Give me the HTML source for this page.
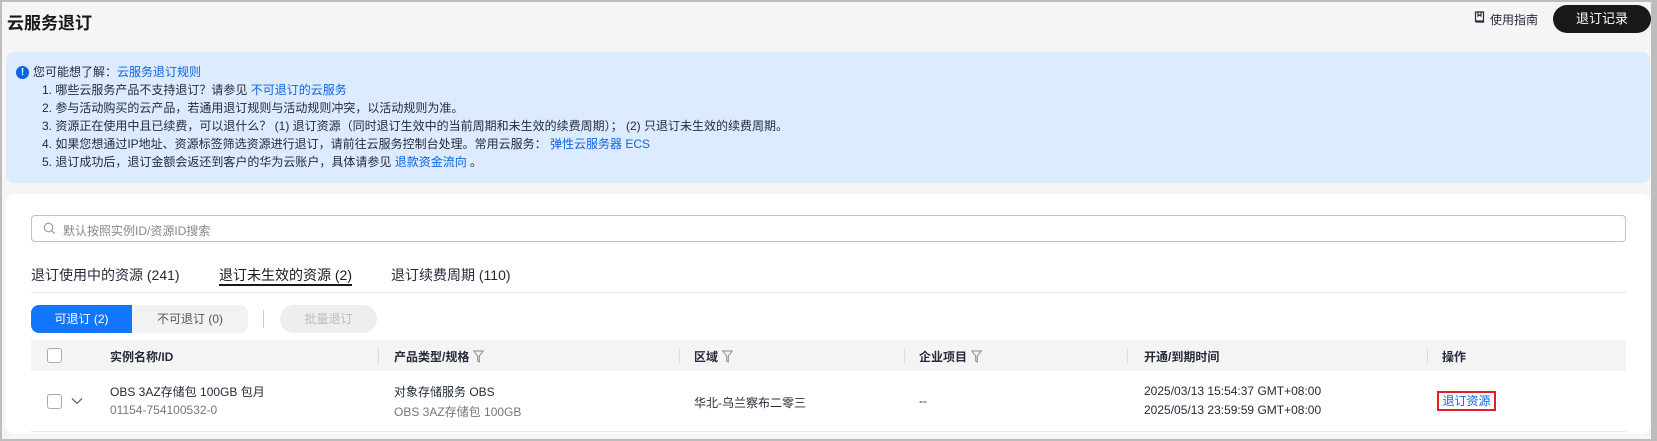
<!DOCTYPE html>
<html><head><meta charset="utf-8"><style>
*{box-sizing:border-box;margin:0;padding:0}
body{width:1657px;height:441px;overflow:hidden;background:#f5f5f5;font-family:"Liberation Sans","Noto Sans CJK SC",sans-serif;font-size:12px;color:#252b3a;position:relative}
.frame{position:absolute;left:0;top:0;width:1657px;height:441px;border:2px solid #bdbdbd;border-right-width:6px;pointer-events:none}
.a{position:absolute;white-space:nowrap}
.blue{color:#0d64e6}
.info{position:absolute;left:6px;top:52px;width:1644px;height:131px;background:#dcebff;border-radius:8px}
.card{position:absolute;left:6px;top:194px;width:1644px;height:240px;background:#fff;border-radius:8px}
.th{position:absolute;top:340px;left:31px;width:1595px;height:31px;background:#f4f4f4}
.sep{position:absolute;top:8px;width:1px;height:16px;background:#ddd}
.hd{position:absolute;top:8px;font-size:12px;color:#252b3a;font-weight:bold}
.cb{position:absolute;width:15px;height:15px;border:1px solid #aaa;border-radius:3px;background:#fff}
.fl{display:inline-block;vertical-align:-2px;margin-left:4px}
</style></head><body>
<div class="a" style="left:7px;top:9px;font-size:17px;font-weight:bold;color:#191919">云服务退订</div>
<svg class="a" style="left:1474px;top:11px" width="11" height="13" viewBox="0 0 11 13"><path d="M1.5 1h8v10h-7a1 1 0 0 1-1-1z M1.5 10h8 M4 1v4l1.5-1 1.5 1V1" fill="none" stroke="#252b3a" stroke-width="1.2"/></svg>
<div class="a" style="left:1490px;top:11px;font-size:12px">使用指南</div>
<div class="a" style="left:1553px;top:5px;width:98px;height:28px;border-radius:14px;background:#191919;color:#fff;font-size:13px;text-align:center;line-height:28px">退订记录</div>

<div class="info"></div>
<div class="a" style="left:16px;top:66px;width:13px;height:13px;border-radius:50%;background:#0d64e6;color:#fff;font-size:10px;font-weight:bold;text-align:center;line-height:13px">!</div>
<div class="a" style="left:33px;top:63px;line-height:18px;font-size:12px;color:#252b3a">您可能想了解：<span class="blue">云服务退订规则</span></div>
<div class="a" style="left:42px;top:81px;line-height:18px;font-size:12px">
1. 哪些云服务产品不支持退订？请参见 <span class="blue">不可退订的云服务</span><br>
2. 参与活动购买的云产品，若通用退订规则与活动规则冲突，以活动规则为准。<br>
3. 资源正在使用中且已续费，可以退什么？ (1) 退订资源（同时退订生效中的当前周期和未生效的续费周期）； (2) 只退订未生效的续费周期。<br>
4. 如果您想通过IP地址、资源标签筛选资源进行退订，请前往云服务控制台处理。常用云服务： <span class="blue">弹性云服务器 ECS</span><br>
5. 退订成功后，退订金额会返还到客户的华为云账户，具体请参见 <span class="blue">退款资金流向</span> 。</div>

<div class="card"></div>
<div class="a" style="left:31px;top:215px;width:1595px;height:27px;border:1px solid #c2c2c2;border-radius:4px"></div>
<svg class="a" style="left:43px;top:222px" width="13" height="13" viewBox="0 0 13 13"><circle cx="5.5" cy="5.5" r="4.3" fill="none" stroke="#999" stroke-width="1.1"/><path d="M8.7 8.7l3 3" stroke="#999" stroke-width="1.1"/></svg>
<div class="a" style="left:63px;top:222px;font-size:12px;color:#888">默认按照实例ID/资源ID搜索</div>

<div class="a" style="left:31px;top:265px;font-size:14px">退订使用中的资源 (241)</div>
<div class="a" style="left:219px;top:265px;font-size:14px;color:#191919">退订未生效的资源 (2)</div>
<div class="a" style="left:219px;top:284px;width:133px;height:2px;background:#191919"></div>
<div class="a" style="left:391px;top:265px;font-size:14px">退订续费周期 (110)</div>
<div class="a" style="left:31px;top:292px;width:1595px;height:1px;background:#e8e8e8"></div>

<div class="a" style="left:31px;top:305px;width:101px;height:28px;background:#1476ff;border-radius:8px 0 0 8px;color:#fff;text-align:center;line-height:28px">可退订 (2)</div>
<div class="a" style="left:132px;top:305px;width:116px;height:28px;background:#f2f2f2;border-radius:0 8px 8px 0;color:#555;text-align:center;line-height:28px">不可退订 (0)</div>
<div class="a" style="left:263px;top:310px;width:1px;height:18px;background:#ccc"></div>
<div class="a" style="left:280px;top:305px;width:97px;height:28px;background:#eee;border-radius:14px;color:#bbb;text-align:center;line-height:28px">批量退订</div>

<div class="th">
<div class="cb" style="left:16px;top:8px"></div>
<div class="hd" style="left:79px">实例名称/ID</div>
<div class="sep" style="left:347px"></div><div class="hd" style="left:363px">产品类型/规格<svg class="fl" width="11" height="13" viewBox="0 0 11 13"><path d="M0.8 1h9.4L6.3 6v6L4.7 11V6z" fill="none" stroke="#888" stroke-width="1"/></svg></div>
<div class="sep" style="left:648px"></div><div class="hd" style="left:663px">区域<svg class="fl" width="11" height="13" viewBox="0 0 11 13"><path d="M0.8 1h9.4L6.3 6v6L4.7 11V6z" fill="none" stroke="#888" stroke-width="1"/></svg></div>
<div class="sep" style="left:873px"></div><div class="hd" style="left:888px">企业项目<svg class="fl" width="11" height="13" viewBox="0 0 11 13"><path d="M0.8 1h9.4L6.3 6v6L4.7 11V6z" fill="none" stroke="#888" stroke-width="1"/></svg></div>
<div class="sep" style="left:1096px"></div><div class="hd" style="left:1113px">开通/到期时间</div>
<div class="sep" style="left:1396px"></div><div class="hd" style="left:1411px">操作</div>
</div>
<div class="cb" style="left:47px;top:394px"></div>
<svg class="a" style="left:71px;top:397px" width="12" height="8" viewBox="0 0 12 8"><path d="M1 1.5l5 5 5-5" fill="none" stroke="#666" stroke-width="1.3"/></svg>
<div class="a" style="left:110px;top:383px;font-size:12px">OBS 3AZ存储包 100GB 包月</div>
<div class="a" style="left:110px;top:403px;font-size:12px;color:#777">01154-754100532-0</div>
<div class="a" style="left:394px;top:383px;font-size:12px">对象存储服务 OBS</div>
<div class="a" style="left:394px;top:403px;font-size:12px;color:#777">OBS 3AZ存储包 100GB</div>
<div class="a" style="left:694px;top:394px;font-size:12px">华北-乌兰察布二零三</div>
<div class="a" style="left:919px;top:394px;font-size:12px">--</div>
<div class="a" style="left:1144px;top:384px;font-size:12px">2025/03/13 15:54:37 GMT+08:00</div>
<div class="a" style="left:1144px;top:403px;font-size:12px">2025/05/13 23:59:59 GMT+08:00</div>
<div class="a" style="left:1437px;top:391px;width:59px;height:20px;border:2px solid #e51c23;color:#0d64e6;font-size:12px;text-align:center;line-height:16px">退订资源</div>
<div class="a" style="left:31px;top:431px;width:1595px;height:1px;background:#e8e8e8"></div>
<div class="frame"></div>
</body></html>
